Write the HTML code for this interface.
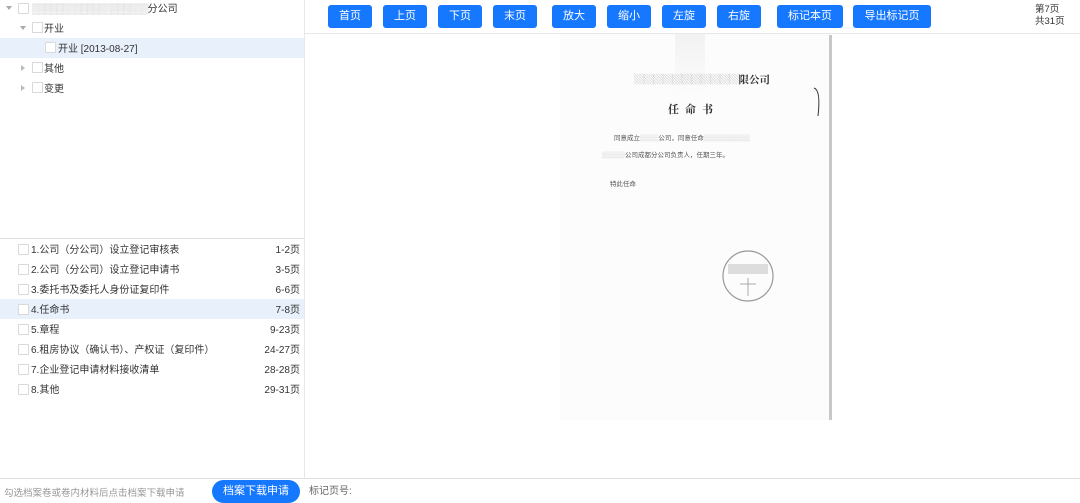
<!DOCTYPE html>
<html><head><meta charset="utf-8"><style>
*{margin:0;padding:0;box-sizing:border-box}
body{width:1080px;height:503px;background:#fff;font-family:"Liberation Sans","Noto Sans CJK SC",sans-serif;font-size:10px;color:#333;position:relative;overflow:hidden}
.a{position:absolute}
.cb{position:absolute;width:11px;height:11px;border:1px solid #d9d9d9;background:#fff;border-radius:1px}
.row{position:absolute;left:0;width:304px;height:20px}
.t{position:absolute;font-size:10px;color:#333;white-space:nowrap;line-height:12px;margin-top:2px}
.btn{position:absolute;top:5px;height:23px;background:#1677ff;color:#fff;border-radius:3px;font-size:11px;text-align:center;line-height:23px}
.tri{position:absolute;width:0;height:0}
</style></head><body>
<div class="a" style="left:304px;top:0;width:1px;height:478px;background:#e8e8e8"></div>
<div class="a" style="left:0;top:238px;width:304px;height:1px;background:#e0e0e0"></div>
<div class="row" style="top:38px;background:#e8f0fb"></div>
<div class="tri" style="left:6px;top:6px;border-left:3px solid transparent;border-right:3px solid transparent;border-top:4px solid #aaa"></div>
<div class="cb" style="left:18px;top:3px"></div>
<div class="t" style="left:32px;top:2px"><span style="color:#bbb;letter-spacing:-1px">▒▒▒▒▒▒▒▒▒▒▒▒▒▒▒▒▒▒▒</span>分公司</div>
<div class="tri" style="left:20px;top:26px;border-left:3px solid transparent;border-right:3px solid transparent;border-top:4px solid #aaa"></div>
<div class="cb" style="left:32px;top:22px"></div>
<div class="t" style="left:44px;top:22px">开业</div>
<div class="cb" style="left:45px;top:42px"></div>
<div class="t" style="left:58px;top:42px">开业 [2013-08-27]</div>
<div class="tri" style="left:21px;top:65px;border-top:3px solid transparent;border-bottom:3px solid transparent;border-left:4px solid #bbb"></div>
<div class="cb" style="left:32px;top:62px"></div>
<div class="t" style="left:44px;top:62px">其他</div>
<div class="tri" style="left:21px;top:85px;border-top:3px solid transparent;border-bottom:3px solid transparent;border-left:4px solid #bbb"></div>
<div class="cb" style="left:32px;top:82px"></div>
<div class="t" style="left:44px;top:82px">变更</div>

<div class="row" style="top:299px;background:#e8f0fb"></div>
<div class="cb" style="left:18px;top:244px"></div><div class="t" style="left:31px;top:243px">1.公司（分公司）设立登记审核表</div><div class="t" style="right:780px;top:243px">1-2页</div>
<div class="cb" style="left:18px;top:264px"></div><div class="t" style="left:31px;top:263px">2.公司（分公司）设立登记申请书</div><div class="t" style="right:780px;top:263px">3-5页</div>
<div class="cb" style="left:18px;top:284px"></div><div class="t" style="left:31px;top:283px">3.委托书及委托人身份证复印件</div><div class="t" style="right:780px;top:283px">6-6页</div>
<div class="cb" style="left:18px;top:304px"></div><div class="t" style="left:31px;top:303px">4.任命书</div><div class="t" style="right:780px;top:303px">7-8页</div>
<div class="cb" style="left:18px;top:324px"></div><div class="t" style="left:31px;top:323px">5.章程</div><div class="t" style="right:780px;top:323px">9-23页</div>
<div class="cb" style="left:18px;top:344px"></div><div class="t" style="left:31px;top:343px">6.租房协议（确认书）、产权证（复印件）</div><div class="t" style="right:780px;top:343px">24-27页</div>
<div class="cb" style="left:18px;top:364px"></div><div class="t" style="left:31px;top:363px">7.企业登记申请材料接收清单</div><div class="t" style="right:780px;top:363px">28-28页</div>
<div class="cb" style="left:18px;top:384px"></div><div class="t" style="left:31px;top:383px">8.其他</div><div class="t" style="right:780px;top:383px">29-31页</div>

<div class="a" style="left:0;top:478px;width:1080px;height:1px;background:#e0e0e0"></div>
<div class="t" style="left:4px;top:486px;color:#999;font-size:9.5px">勾选档案卷或卷内材料后点击档案下载申请</div>
<div class="a" style="left:212px;top:480px;width:88px;height:23px;background:#1677ff;border-radius:12px;color:#fff;font-size:11px;text-align:center;line-height:23px">档案下载申请</div>
<div class="t" style="left:309px;top:484px;color:#666">标记页号:</div>

<div class="a" style="left:305px;top:33px;width:775px;height:1px;background:#e8e8e8"></div>
<div class="btn" style="left:328px;width:44px">首页</div>
<div class="btn" style="left:383px;width:44px">上页</div>
<div class="btn" style="left:438px;width:44px">下页</div>
<div class="btn" style="left:493px;width:44px">末页</div>
<div class="btn" style="left:552px;width:44px">放大</div>
<div class="btn" style="left:607px;width:44px">缩小</div>
<div class="btn" style="left:662px;width:44px">左旋</div>
<div class="btn" style="left:717px;width:44px">右旋</div>
<div class="btn" style="left:777px;width:66px">标记本页</div>
<div class="btn" style="left:853px;width:78px">导出标记页</div>
<div class="t" style="left:1035px;top:2px;font-size:9.5px;line-height:12px;color:#333">第7页<br>共31页</div>

<div class="a" style="left:560px;top:34px;width:270px;height:386px;background:#fcfcfc"></div>
<div class="a" style="left:829px;top:35px;width:3px;height:385px;background:#c8c8c8"></div>
<div class="a" style="left:675px;top:34px;width:30px;height:60px;background:linear-gradient(#f2f2f2,#fcfcfc)"></div>
<div class="t" style="left:634px;top:72px;font-size:10.5px;color:#333;font-weight:bold;font-family:'Noto Serif CJK SC',serif"><span style="color:#bbb;letter-spacing:-1px;font-weight:normal">▒▒▒▒▒▒▒▒▒▒▒</span>限公司</div>
<div class="t" style="left:668px;top:101px;font-size:11px;color:#333;letter-spacing:6px;font-weight:bold;font-family:'Noto Serif CJK SC',serif">任命书</div>
<div class="t" style="left:614px;top:131px;font-size:6.5px;color:#555">同意成立<span style="color:#ccc">▒▒▒▒</span>公司，同意任命<span style="color:#ccc">▒▒▒▒▒▒▒▒▒▒</span></div>
<div class="t" style="left:602px;top:148px;font-size:6.5px;color:#555"><span style="color:#ccc">▒▒▒▒▒</span>公司成都分公司负责人，任期三年。</div>
<div class="t" style="left:610px;top:177px;font-size:6.5px;color:#555">特此任命</div>
<svg class="a" style="left:812px;top:86px" width="12" height="32"><path d="M2 2 Q9 4 6 30" stroke="#333" fill="none" stroke-width="1"/></svg>
<svg class="a" style="left:720px;top:248px" width="58" height="56"><circle cx="28" cy="28" r="25" fill="none" stroke="#999" stroke-width="1.2"/><rect x="8" y="16" width="40" height="10" fill="#ddd"/><path d="M28 30 L28 48 M20 36 L36 36" stroke="#aaa"/></svg>
</body></html>
